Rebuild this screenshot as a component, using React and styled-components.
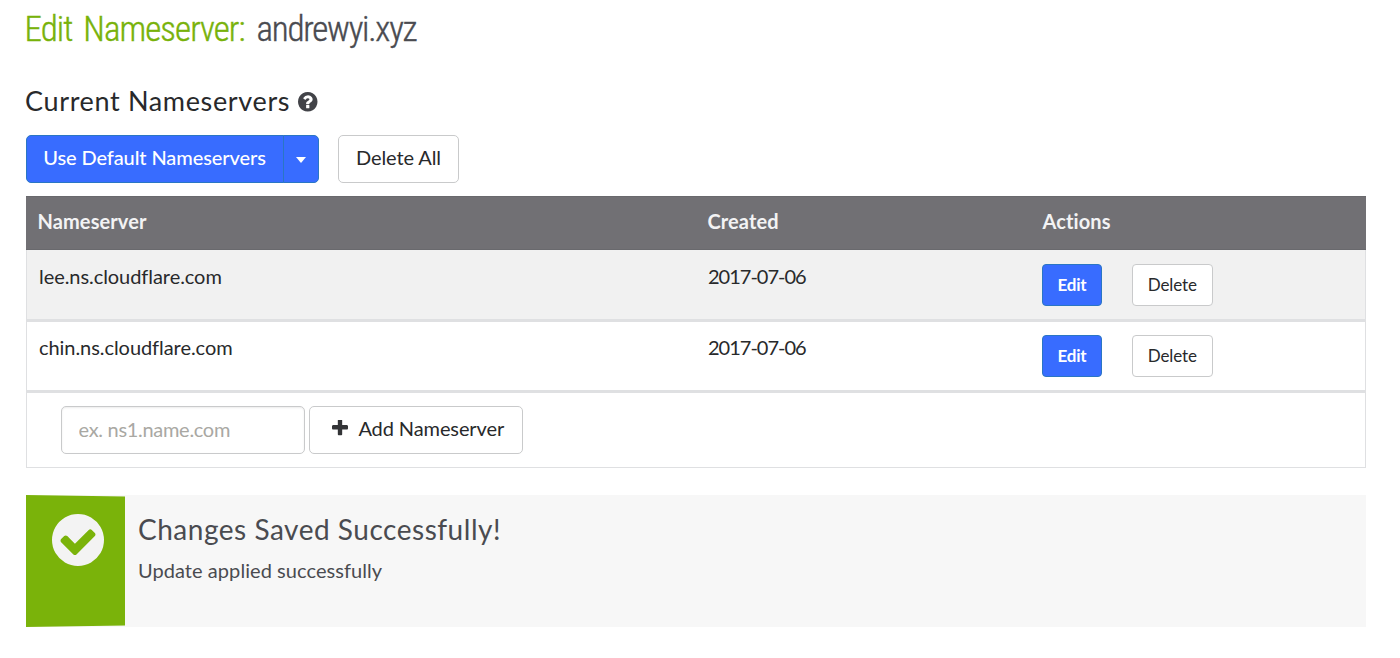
import React from "react";
import styled, { createGlobalStyle } from "styled-components";

const GlobalStyle = createGlobalStyle`
  *, *::before, *::after { box-sizing: border-box; }
  body {
    margin: 0;
    background: #fff;
    color: #28292b;
    font-family: Lato, "Open Sans", sans-serif;
    font-size: 20px;
    line-height: 24px;
  }
  button, input { font: inherit; color: inherit; margin: 0; }
`;

const Page = styled.main`
  display: flex;
  flex-direction: column;
  width: 1400px;
  padding: 9px 34px 0 25.5px;
`;

const Title = styled.h1`
  display: flex;
  gap: 12px;
  margin: 0 0 0 -1px;
  color: #78b20a;
  font-family: Roboto, sans-serif;
  font-size: 35px;
  font-weight: 300;
  font-stretch: 75%;
  line-height: 42px;
  letter-spacing: -0.95px;
  word-spacing: 4px;
  white-space: nowrap;
  -webkit-text-stroke: 0.4px currentColor;
`;

const Domain = styled.span`
  color: #4a4b50;
  letter-spacing: -1.25px;
`;

const Heading = styled.h2`
  display: flex;
  align-items: center;
  gap: 8px;
  margin: 34px 0 0 -0.5px;
  font-size: 27px;
  font-weight: 400;
  line-height: 32px;
  letter-spacing: 0.65px;
  white-space: nowrap;
`;

const HelpMark = styled.span`
  display: flex;
  padding-top: 2px;
`;

const Icon = styled.svg`
  flex: none;
  width: ${(p) => p.$size}px;
  height: ${(p) => p.$size}px;
  fill: ${(p) => p.$color};
`;

const Toolbar = styled.div`
  display: flex;
  gap: 19px;
  margin-top: 18px;
`;

const Button = styled.button`
  display: flex;
  align-items: center;
  justify-content: center;
  width: ${(p) => p.$width}px;
  height: 48px;
  padding: 0 0 4px;
  border: 1px solid ${(p) => (p.$primary ? "#2a76c4" : "#c9cacb")};
  border-radius: 5px;
  background: ${(p) => (p.$primary ? "#386cff" : "#fff")};
  color: ${(p) => (p.$primary ? "#fff" : "#28292b")};
  letter-spacing: -0.1px;
  white-space: nowrap;
`;

const SmallButton = styled(Button)`
  height: 42px;
  padding: 0 0 1px;
  border-radius: 4px;
  font-size: 17px;
  letter-spacing: ${(p) => (p.$primary ? "-0.2px" : "-0.1px")};
  font-weight: ${(p) => (p.$primary ? 700 : 400)};
`;

const SplitButton = styled.div`
  display: flex;
`;

const SplitMain = styled(Button)`
  border-radius: 5px 0 0 5px;
  font-weight: 500;
`;

const SplitToggle = styled(Button)`
  margin-left: -1px;
  padding: 2px 0 0;
  border-radius: 0 5px 5px 0;
`;

const Caret = styled.span`
  border: 5.5px solid transparent;
  border-top: 6px solid #fff;
  border-bottom: 0;
`;

const Table = styled.section`
  margin-top: 13px;
`;

const HeaderRow = styled.div`
  display: grid;
  grid-template-columns: 670px 335px 1fr;
  height: 54px;
  padding: 12px 0 0 12px;
  border: solid #69696d;
  border-width: 1px 0;
  background: #717074;
  color: #f3f3f4;
  font-weight: 700;
  font-variant-ligatures: none;
  letter-spacing: 0.1px;
`;

const Row = styled.div`
  display: grid;
  grid-template-columns: 669px 335px 1fr;
  height: ${(p) => (p.$first ? 72 : 71)}px;
  padding: ${(p) => (p.$first ? 14 : 13)}px 0 0 12.5px;
  border: 1px solid #dfe0e2;
  border-width: 0 1px 3px;
  background: ${(p) => (p.$first ? "#f1f1f1" : "#fff")};
`;

const HostCell = styled.span`
  letter-spacing: -0.06px;
  font-variant-ligatures: common-ligatures;
`;

const DateCell = styled.span`
  letter-spacing: -1px;
`;

const Actions = styled.div`
  display: flex;
  gap: 30px;
  margin-left: -1px;
`;

const AddRow = styled.form`
  display: flex;
  gap: 4.5px;
  height: 75px;
  padding: 13px 0 0 34px;
  border: 1px solid #dfe0e2;
  border-top: 0;
`;

const Field = styled.input`
  width: 244px;
  height: 48px;
  padding: 0 17px 2px;
  border: 1px solid #c9cacb;
  border-radius: 5px;
  background: #fff;
  box-shadow: inset 0 1px 2px rgba(0, 0, 0, 0.08);
  letter-spacing: -0.3px;
  outline: none;
  &::placeholder { color: #a9a8a3; opacity: 1; }
`;

const AddButton = styled(Button)`
  gap: 10px;
  padding-left: 5px;
`;

const Alert = styled.section`
  display: flex;
  height: 132px;
  margin-top: 27px;
  background: #f7f7f7;
`;

const AlertFlag = styled.div`
  display: flex;
  justify-content: center;
  width: 99.5px;
  padding: 19px 0 0 5px;
  background: #7ab30a;
  clip-path: polygon(0 0, 100% 1.5px, 100% 130.5px, 0 100%);
`;

const AlertBody = styled.div`
  padding: 17px 0 0 13px;
  color: #4a4b50;
`;

const AlertTitle = styled.h3`
  margin: 0;
  font-size: 28px;
  font-weight: 400;
  line-height: 34px;
  letter-spacing: 0.52px;
`;

const AlertText = styled.p`
  margin: 12px 0 0;
  letter-spacing: 0.06px;
`;

const QuestionIcon = () => (
  <Icon $size={19.5} $color="#424348" viewBox="128 128 1536 1536">
    <path d="M1024 1376v-192q0-14-9-23t-23-9h-192q-14 0-23 9t-9 23v192q0 14 9 23t23 9h192q14 0 23-9t9-23zm256-672q0-88-55.500-163t-138.500-116-170-41q-243 0-371 213-15 24 8 42l132 100q7 6 19 6 16 0 25-12 53-68 86-92 34-24 86-24 48 0 85.500 26t37.500 59q0 38-20 61t-68 45q-63 28-115.500 86.500t-52.500 125.500v36q0 14 9 23t23 9h192q14 0 23-9t9-23q0-19 21.500-49.500t54.500-49.500q32-18 49-28.500t46-35 44.500-48 28-60.500 12.500-81zm384 192q0 209-103 385.500t-279.500 279.500-385.500 103-385.500-103-279.500-279.500-103-385.500 103-385.500 279.500-279.500 385.500-103 385.500 103 279.500 279.500 103 385.500z" />
  </Icon>
);

const CheckIcon = () => (
  <Icon $size={52} $color="#f3f3f3" viewBox="128 128 1536 1536">
    <path d="M1412 734q0-28-18-46l-91-90q-19-19-45-19t-45 19l-408 407-226-226q-19-19-45-19t-45 19l-91 90q-18 18-18 46 0 27 18 45l362 362q19 19 45 19 27 0 46-19l543-543q18-18 18-45zm252 162q0 209-103 385.500t-279.500 279.500-385.500 103-385.500-103-279.500-279.500-103-385.500 103-385.500 279.500-279.500 385.500-103 385.500 103 279.500 279.500 103 385.500z" />
  </Icon>
);

const PlusIcon = () => (
  <Icon $size={16} $color="#333437" viewBox="192 192 1408 1408">
    <path d="M1600 736v192q0 40-28 68t-68 28h-416v416q0 40-28 68t-68 28h-192q-40 0-68-28t-28-68v-416h-416q-40 0-68-28t-28-68v-192q0-40 28-68t68-28h416v-416q0-40 28-68t68-28h192q40 0 68 28t28 68v416h416q40 0 68 28t28 68z" />
  </Icon>
);

const nameservers = [
  { host: "lee.ns.cloudflare.com", created: "2017-07-06" },
  { host: "chin.ns.cloudflare.com", created: "2017-07-06" },
];

export default function App() {
  return (
    <Page>
      <GlobalStyle />
      <Title>
        Edit Nameserver: <Domain>andrewyi.xyz</Domain>
      </Title>
      <Heading>
        Current Nameservers
        <HelpMark>
          <QuestionIcon />
        </HelpMark>
      </Heading>
      <Toolbar>
        <SplitButton>
          <SplitMain $primary $width={258}>Use Default Nameservers</SplitMain>
          <SplitToggle $primary $width={36.5} aria-label="More options">
            <Caret />
          </SplitToggle>
        </SplitButton>
        <Button $width={121}>Delete All</Button>
      </Toolbar>
      <Table>
        <HeaderRow>
          <span>Nameserver</span>
          <span>Created</span>
          <span>Actions</span>
        </HeaderRow>
        {nameservers.map((ns, i) => (
          <Row key={ns.host} $first={i === 0}>
            <HostCell>{ns.host}</HostCell>
            <DateCell>{ns.created}</DateCell>
            <Actions>
              <SmallButton $primary $width={60}>Edit</SmallButton>
              <SmallButton $width={80.5}>Delete</SmallButton>
            </Actions>
          </Row>
        ))}
        <AddRow>
          <Field placeholder="ex. ns1.name.com" />
          <AddButton type="button" $width={213.5}>
            <PlusIcon /> Add Nameserver
          </AddButton>
        </AddRow>
      </Table>
      <Alert>
        <AlertFlag>
          <CheckIcon />
        </AlertFlag>
        <AlertBody>
          <AlertTitle>Changes Saved Successfully!</AlertTitle>
          <AlertText>Update applied successfully</AlertText>
        </AlertBody>
      </Alert>
    </Page>
  );
}
